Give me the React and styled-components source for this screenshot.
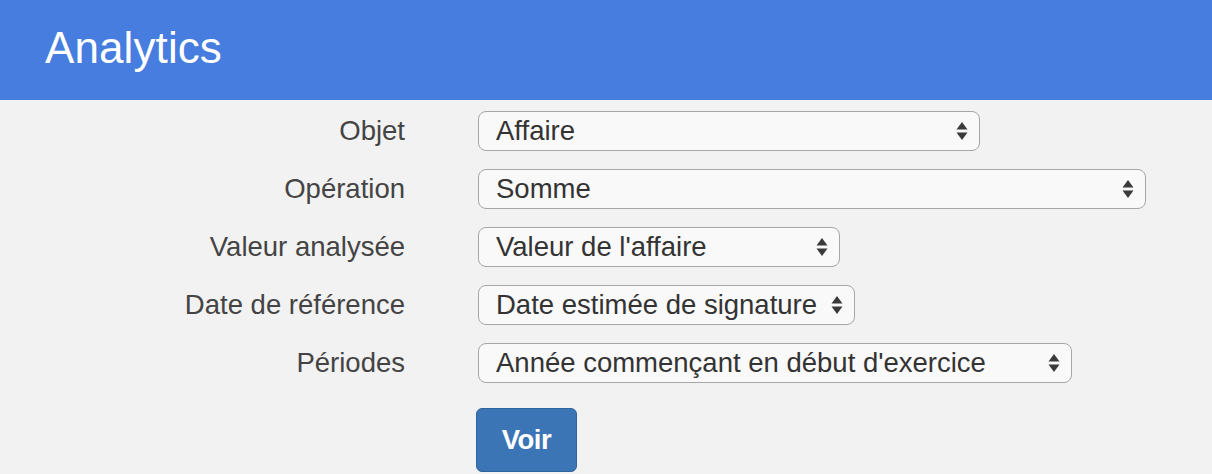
import React from 'react';
import styled, { createGlobalStyle } from 'styled-components';

/* Data ---------------------------*/
const fields = [
    { label: 'Objet', value: 'Affaire', width: 502 },
    { label: 'Opération', value: 'Somme', width: 668 },
    { label: 'Valeur analysée', value: "Valeur de l'affaire", width: 362 },
    { label: 'Date de référence', value: 'Date estimée de signature', width: 377 },
    { label: 'Périodes', value: "Année commençant en début d'exercice", width: 594 },
];

/* Components ---------------------------*/
const Arrows = () => (
    <svg width="12" height="18" viewBox="0 0 12 18">
        <path d="M6 0 L11.5 7.5 L0.5 7.5 Z" fill="#3a3a3a" />
        <path d="M6 18 L11.5 10.5 L0.5 10.5 Z" fill="#3a3a3a" />
    </svg>
);

const Select = ({ value, width }) => (
    <SelectStyled $width={width}>
        <span>{value}</span>
        <Arrows />
    </SelectStyled>
);

const App = () => {
    return (
        <>
            <GlobalStyle />
            <Page>
                <Header>
                    <h1>Analytics</h1>
                </Header>
                <Form>
                    {fields.map((f) => (
                        <React.Fragment key={f.label}>
                            <Label>{f.label}</Label>
                            <Select value={f.value} width={f.width} />
                        </React.Fragment>
                    ))}
                    <span />
                    <Button>Voir</Button>
                </Form>
            </Page>
        </>
    );
};

export default App;

/* Styles ---------------------------*/
const GlobalStyle = createGlobalStyle`
    html, body {
        margin: 0;
        padding: 0;
        background: #f2f2f2;
        font-family: "Liberation Sans", Arial, sans-serif;
    }
`;

const Page = styled.div`
    width: 1212px;
    height: 474px;
    overflow: hidden;
    background: #f2f2f2;
`;

const Header = styled.header`
    height: 100px;
    background: #467ddf;
    display: flex;
    align-items: center;
    padding-left: 45px;

    h1 {
        margin: 0;
        padding-bottom: 4px;
        color: #fff;
        font-weight: normal;
        font-size: 44px;
        letter-spacing: 0.1px;
    }
`;

const Form = styled.div`
    display: grid;
    grid-template-columns: 405px auto;
    column-gap: 73px;
    row-gap: 18px;
    padding-top: 11px;
    align-items: center;
    justify-items: start;

    & > button {
        margin-top: 7px;
        margin-left: -2px;
    }
`;

const Label = styled.label`
    justify-self: end;
    font-size: 27.5px;
    color: #444;
    line-height: 40px;
`;

const SelectStyled = styled.div`
    box-sizing: border-box;
    width: ${(p) => p.$width}px;
    height: 40px;
    display: flex;
    align-items: center;
    justify-content: space-between;
    padding: 0 11px 0 17px;
    background: #f9f9f9;
    border: 1.5px solid #a6a6a6;
    border-radius: 8px;
    font-size: 27.5px;
    color: #333;
    white-space: nowrap;

    svg {
        flex: none;
        margin-left: 4px;
    }
`;

const Button = styled.button`
    box-sizing: border-box;
    width: 101px;
    height: 64px;
    background: #3c75b5;
    border: 1px solid #2f649f;
    border-radius: 6px;
    color: #fff;
    font-family: "Liberation Sans", Arial, sans-serif;
    font-size: 27.5px;
    font-weight: bold;
    letter-spacing: -0.5px;
    padding: 0;
`;
